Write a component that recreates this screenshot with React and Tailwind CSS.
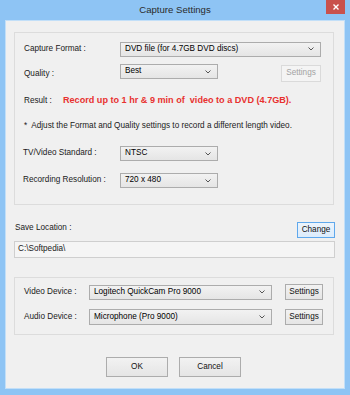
import React from "react";

const F = { fontFamily: '"Liberation Sans", Arial, sans-serif' };

function Chevron() {
  return (
    <svg width="6" height="4" viewBox="0 0 6 4" className="shrink-0">
      <path d="M0.5 0.5 L3 3 L5.5 0.5" fill="none" stroke="#555" strokeWidth="1" />
    </svg>
  );
}

function Combo({ text, w, h = "h-[15px]" }) {
  return (
    <div
      className={`${w} ${h} flex items-center justify-between border border-[#acacac] bg-gradient-to-b from-[#f2f2f2] to-[#e5e5e5] pl-[4px] pr-[6px] text-[8.2px] text-black`}
    >
      <span className="leading-none">{text}</span>
      <Chevron />
    </div>
  );
}

function Btn({ children, w, h, disabled, focus }) {
  let cls = "border-[#acacac] bg-gradient-to-b from-[#f2f2f2] to-[#e5e5e5] text-[#111]";
  if (disabled) cls = "border-[#dadada] bg-[#f4f4f4] text-[#a3a3a3]";
  if (focus) cls = "border-[#5fa8ec] bg-gradient-to-b from-[#ecf4fc] to-[#dcecfc] text-[#111]";
  return (
    <div className={`${w} ${h} flex items-center justify-center border ${cls} text-[8.2px] leading-none`}>
      {children}
    </div>
  );
}

export default function App() {
  return (
    <div className="w-[350px] h-[395px] bg-[#8ec4f4] flex flex-col" style={F}>
      {/* title bar */}
      <div className="h-[20px] relative flex items-center justify-center">
        <span className="text-[9.6px] text-[#2b2b2b] leading-none">Capture Settings</span>
        <div className="absolute right-[5px] top-0 w-[19px] h-[14px] bg-[#c9514c] flex items-center justify-center">
          <svg width="6" height="6" viewBox="0 0 6 6">
            <path d="M0.5 0.5 L5.5 5.5 M5.5 0.5 L0.5 5.5" stroke="#fff" strokeWidth="1.4" />
          </svg>
        </div>
      </div>

      {/* client */}
      <div className="mx-[5px] h-[369px] bg-[#f0f0f0] border border-[#c2dff8] flex flex-col text-[8.2px] text-[#1a1a1a]">
        {/* group 1 */}
        <div className="ml-[8px] mt-[11px] w-[320px] h-[173px] border border-[#dcdcdc] flex flex-col pl-[9px]">
          <div className="mt-[8px] h-[16px] flex items-center">
            <span className="w-[96px]">Capture Format :</span>
            <Combo text="DVD file (for 4.7GB DVD discs)" w="w-[201px]" />
          </div>
          <div className="mt-[7px] h-[18px] flex items-start">
            <span className="w-[96px] mt-[4px]">Quality :</span>
            <Combo text="Best" w="w-[98px]" />
            <div className="ml-[63px] mt-[1px]">
              <Btn w="w-[40px]" h="h-[17px]" disabled>Settings</Btn>
            </div>
          </div>
          <div className="mt-[13px] h-[12px] flex items-center">
            <span className="w-[39px]">Result :</span>
            <span className="font-bold text-[9.1px] text-[#e8312f] whitespace-pre">Record up to 1 hr &amp; 9 min of  video to a DVD (4.7GB).</span>
          </div>
          <div className="mt-[13px] h-[12px] flex items-center">
            <span className="whitespace-pre">*  Adjust the Format and Quality settings to record a different length video.</span>
          </div>
          <div className="mt-[14px] h-[15px] flex items-center">
            <span className="w-[96px] -ml-[1px] mr-[1px]">TV/Video Standard :</span>
            <Combo text="NTSC" w="w-[98px]" />
          </div>
          <div className="mt-[12px] h-[15px] flex items-center">
            <span className="w-[96px] -ml-[1px] mr-[1px]">Recording Resolution :</span>
            <Combo text="720 x 480" w="w-[98px]" />
          </div>
        </div>

        {/* save location */}
        <div className="ml-[9px] mt-[17px] w-[320px] h-[16px] flex items-center justify-between">
          <span className="mb-[4px]">Save Location :</span>
          <Btn w="w-[38px]" h="h-[16px]" focus>Change</Btn>
        </div>
        <div className="ml-[8px] mt-[3px] w-[321px] h-[17px] border border-[#cfcfcf] bg-[#f5f5f5] flex items-center pl-[3px]">
          C:\Softpedia\
        </div>

        {/* group 2 */}
        <div className="ml-[8px] mt-[19px] w-[320px] h-[58px] border border-[#dcdcdc] flex flex-col pl-[9px]">
          <div className="mt-[6px] h-[16px] flex items-center">
            <span className="w-[65px]">Video Device :</span>
            <Combo text="Logitech QuickCam Pro 9000" w="w-[183px]" />
            <div className="ml-[13px]">
              <Btn w="w-[38px]" h="h-[16px]">Settings</Btn>
            </div>
          </div>
          <div className="mt-[9px] h-[16px] flex items-center">
            <span className="w-[65px]">Audio Device :</span>
            <Combo text="Microphone (Pro 9000)" w="w-[183px]" h="h-[16px]" />
            <div className="ml-[13px]">
              <Btn w="w-[38px]" h="h-[16px]">Settings</Btn>
            </div>
          </div>
        </div>

        {/* buttons */}
        <div className="mt-[22px] ml-[100px] flex gap-[11px]">
          <Btn w="w-[62px]" h="h-[20px]">OK</Btn>
          <Btn w="w-[62px]" h="h-[20px]">Cancel</Btn>
        </div>
      </div>
    </div>
  );
}
